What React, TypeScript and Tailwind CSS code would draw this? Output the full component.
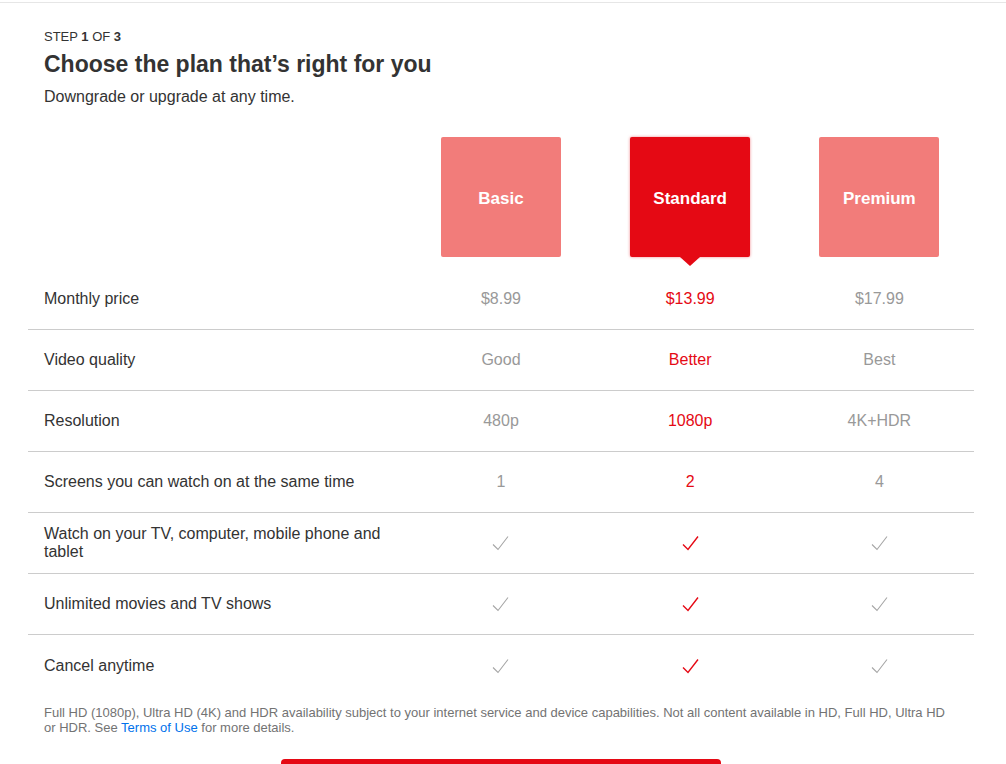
const plans = [
  { name: "Basic", price: "$8.99", quality: "Good", res: "480p", screens: "1" },
  { name: "Standard", price: "$13.99", quality: "Better", res: "1080p", screens: "2" },
  { name: "Premium", price: "$17.99", quality: "Best", res: "4K+HDR", screens: "4" },
];

const selected = 1;

function Check({ on }: { on: boolean }) {
  return (
    <svg width="17" height="16" viewBox="0 0 17 16" fill="none">
      <path
        d="M1 9.5 L6 14.5 L16 1.5"
        stroke={on ? "#e50914" : "#a6a6a6"}
        strokeWidth={on ? 1.4 : 1.1}
      />
    </svg>
  );
}

function Row({ label, cells, last }: { label: string; cells: (string | "check")[]; last?: boolean }) {
  return (
    <div className={`grid grid-cols-[40%_20%_20%_20%] h-[61px] items-center ${last ? "" : "border-b border-[#cccccc]"}`}>
      <div className="px-4 text-[16px] leading-[18px] text-[#333]">{label}</div>
      {cells.map((c, i) => (
        <div
          key={i}
          className={`flex justify-center text-[16px] ${i === selected ? "text-[#e50914]" : "text-[#999]"}`}
        >
          {c === "check" ? <Check on={i === selected} /> : c}
        </div>
      ))}
    </div>
  );
}

export default function App() {
  return (
    <div className="min-h-[764px] bg-white font-['Liberation_Sans',Arial,sans-serif] text-[#333]">
      <div className="h-[3px] border-b border-[#e6e6e6]" />

      <div className="pl-[28px] pr-[32px]">
        {/* Header */}
        <div className="px-4 pt-[26px]">
          <div className="text-[13px] leading-[16px] text-[#333]">
            STEP <b>1</b> OF <b>3</b>
          </div>
          <h1 className="mt-[5px] text-[23px] leading-[28px] font-bold text-[#333]">
            Choose the plan that’s right for you
          </h1>
          <p className="mt-[9px] text-[16px] leading-[20px] text-[#333]">Downgrade or upgrade at any time.</p>
        </div>

        {/* Plan boxes */}
        <div className="grid grid-cols-[40%_20%_20%_20%] mt-[30px] h-[132px]">
          <div />
          {plans.map((p, i) => (
            <div key={p.name} className="flex justify-center">
              <div
                className={`relative w-[120px] h-[120px] rounded-[2px] flex items-center justify-center pt-[4px] text-[17px] font-bold text-white ${
                  i === selected ? "bg-[#e50914] shadow-[0_0_3px_rgba(229,9,20,0.5)]" : "bg-[#f27c7a]"
                }`}
              >
                {p.name}
                {i === selected && (
                  <div className="absolute left-1/2 -translate-x-1/2 top-full w-0 h-0 border-l-[10px] border-r-[10px] border-t-[9px] border-l-transparent border-r-transparent border-t-[#e50914]" />
                )}
              </div>
            </div>
          ))}
        </div>

        {/* Rows */}
        <Row label="Monthly price" cells={plans.map((p) => p.price)} />
        <Row label="Video quality" cells={plans.map((p) => p.quality)} />
        <Row label="Resolution" cells={plans.map((p) => p.res)} />
        <Row label="Screens you can watch on at the same time" cells={plans.map((p) => p.screens)} />
        <Row label="Watch on your TV, computer, mobile phone and tablet" cells={["check", "check", "check"]} />
        <Row label="Unlimited movies and TV shows" cells={["check", "check", "check"]} />
        <Row label="Cancel anytime" cells={["check", "check", "check"]} last />

        {/* Disclaimer */}
        <p className="px-4 mt-[9px] text-[13px] leading-[15px] text-[#737373]">
          Full HD (1080p), Ultra HD (4K) and HDR availability subject to your internet service and device capabilities. Not all content available in HD, Full HD, Ultra HD or HDR. See{" "}
          <a href="#" className="text-[#0071eb]">Terms of Use</a> for more details.
        </p>

        <div className="flex justify-center mt-[24px]">
          <button className="w-[440px] h-[48px] rounded-[4px] bg-[#e50914] text-white text-[20px]">Next</button>
        </div>
      </div>
    </div>
  );
}
